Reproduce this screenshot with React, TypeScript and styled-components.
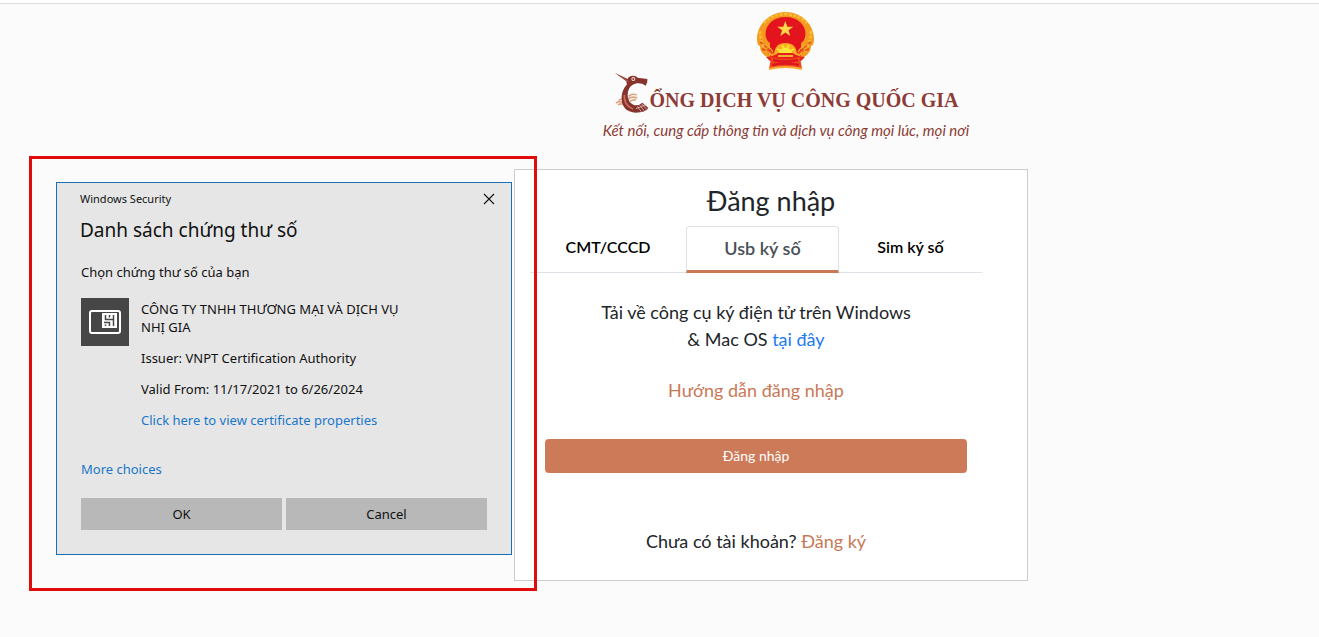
import React from "react";
import styled, { createGlobalStyle } from "styled-components";

const GlobalStyle = createGlobalStyle`
  * { box-sizing: border-box; }
  html { background: #fbfbfb; }
  body { margin: 0; font-family: Lato, "Noto Sans", sans-serif; color: #212529; }
  h1, h2, p { margin: 0; font-weight: 400; }
  button { font-family: inherit; cursor: pointer; border: 0; padding: 0; background: none; }
  a { text-decoration: none; }
`;

const TopEdge = styled.div`
  height: 4px;
  background: #fff;
  border-bottom: 1px solid #dcdcdc;
`;

const Page = styled.main`
  display: grid;
  grid-template-columns: 514px minmax(0, 514px) 1fr;
  padding-bottom: 46px;
`;

const Brand = styled.header`
  display: flex;
  flex-direction: column;
  align-items: center;
  height: 165px;
  padding: 7px 0 0 30px;
  color: #8c3b36;
`;

const Wordmark = styled.h1`
  display: flex;
  align-items: flex-end;
  height: 42px;
  font: 700 20px/26px "Liberation Serif", serif;
  white-space: nowrap;
`;

const Slogan = styled.p`
  margin-top: 7px;
  font-size: 15px;
  line-height: 20px;
  font-style: italic;
  white-space: nowrap;
`;

const Highlight = styled.section`
  position: relative;
  z-index: 1;
  align-self: start;
  margin: 152px -23px 0 29px;
  padding: 23px 22px 33px 24px;
  border: 3px solid #e00b0b;
`;

const Dialog = styled.div`
  display: flex;
  flex-direction: column;
  padding: 7px 24px 24px;
  background: #e6e6e6;
  border: 1px solid #1a6fb5;
  color: #111;
  font: 13px/18px "Noto Sans", sans-serif;
`;

const TitleBar = styled.div`
  display: flex;
  align-items: center;
  justify-content: space-between;
  margin: 0 -8px 0 -1px;
  height: 18px;
  font-size: 11px;
`;

const CloseButton = styled.button`
  display: flex;
  width: 12px;
  height: 12px;
`;

const DialogTitle = styled.h2`
  margin: 8px 0 0 -1px;
  font-size: 19px;
  line-height: 28px;
`;

const Prompt = styled.p`
  margin-top: 19px;
`;

const Certificate = styled.div`
  display: flex;
  gap: 12px;
  margin-top: 17px;
`;

const CardTile = styled.span`
  display: flex;
  flex: none;
  align-items: center;
  justify-content: center;
  width: 48px;
  height: 48px;
  background: #464646;
`;

const Details = styled.div`
  display: flex;
  flex-direction: column;
  align-items: flex-start;
  gap: 13px;
  padding-top: 2px;
  max-width: 290px;
`;

const SystemLink = styled.a`
  color: #1a77c9;
`;

const MoreRow = styled.p`
  margin-top: 31px;
`;

const Actions = styled.div`
  display: grid;
  grid-template-columns: 1fr 1fr;
  gap: 4px;
  margin-top: 20px;
`;

const SystemButton = styled.button`
  height: 32px;
  background: #b8b8b8;
  color: #111;
  font-size: 13px;
`;

const LoginCard = styled.section`
  padding: 13px 45px 25px 15px;
  background: #fff;
  border: 1px solid #cbcbd0;
`;

const LoginTitle = styled.h2`
  padding-left: 30px;
  font-size: 27px;
  line-height: 36px;
  text-align: center;
`;

const TabList = styled.div`
  display: grid;
  grid-template-columns: 156fr 153fr 143fr;
  margin-top: 7px;
  border-bottom: 1px solid #dee2e6;
`;

const Tab = styled.button<{ $active?: boolean }>`
  height: 47px;
  margin-bottom: -1px;
  padding-bottom: ${(p) => (p.$active ? 2 : 8)}px;
  border: 1px solid ${(p) => (p.$active ? "#dee2e6" : "transparent")};
  border-bottom: ${(p) => (p.$active ? "3px solid #c97856" : "0")};
  border-radius: 4px 4px 0 0;
  color: ${(p) => (p.$active ? "#495057" : "#000")};
  font-size: ${(p) => (p.$active ? 18 : 16)}px;
  font-weight: 600;
`;

const Panel = styled.div`
  display: flex;
  flex-direction: column;
  padding: 26px 15px 0;
  text-align: center;
  font-size: 18px;
  line-height: 27px;
`;

const Download = styled.p`
  align-self: center;
  max-width: 340px;
`;

const BlueLink = styled.a`
  color: #1b7bf2;
`;

const AccentLink = styled.a`
  color: #c97856;
`;

const Guide = styled.p`
  margin-top: 24px;
`;

const LoginButton = styled.button`
  height: 34px;
  margin-top: 35px;
  padding-bottom: 2px;
  border-radius: 4px;
  background: #cd7a59;
  color: #fff;
  font-size: 14px;
`;

const SignUp = styled.p`
  margin-top: 55px;
`;

function Emblem() {
  return (
    <svg width="60" height="60" viewBox="0 0 60 60" role="img" aria-label="Quốc huy Việt Nam">
      <path d="M29.500 1C13 1 1 14 1 28q0 3 1 6l2 1q0 7 7 11l4 2h29l4-2q7-4 7-11l2-1q1-3 1-6C58 14 46 1 29.500 1z" fill="#f39a1f" />
      <path d="M8 12q7-8 21-9 15 1 22 9M4 20q0 10 5 18M55 20q0 10-5 18" fill="none" stroke="#f9bd3a" strokeWidth="2.500" strokeDasharray="3 1.500" />
      <path d="M4 31q7 4 12 12M6 38q6 2 10 7M55 31q-7 4-12 12M53 38q-6 2-10 7" fill="none" stroke="#e8501c" strokeWidth="2" strokeDasharray="4 1" />
      <path d="M29.500 6C17 6 9.500 14 9.500 23q0 7 6 10l6 2h16l6-2q6-3 6-10C49.500 14 42 6 29.500 6z" fill="#e4141f" />
      <path d="M14 31l8 3-3 9-5-3zM45 31l-8 3 3 9 5-3z" fill="#e4141f" />
      <path d="M29.300 10l2 5.700h6l-4.800 3.600 1.800 5.800-5-3.500-5 3.500 1.800-5.800-4.800-3.600h6z" fill="#ffd84a" />
      <path d="M18 43q1-11 11.500-11T41 43z" fill="#fbb01f" />
      <path d="M23 43a6.500 6.500 0 0 1 13 0z" fill="#ffe63c" />
      <path d="M21 38l4 2M26 34l1.500 3M33 34l-1.500 3M38 38l-4 2" stroke="#ffe63c" strokeWidth="1.500" />
      <path d="M6 33q7 1 11 8M8 40q5 1 9 5M53 33q-7 1-11 8M51 40q-5 1-9 5" fill="none" stroke="#fbb735" strokeWidth="1.200" />
      <path d="M10 46q9-1 12-4h15q3 3 12 4l-4 4H14z" fill="#e4201c" />
      <path d="M15 46q14 4 29 0l2 12q-16-4-33 0z" fill="#f04a1a" />
      <path d="M17 49q12 3 25 0M16 54q13-3 27 0" fill="none" stroke="#df1720" strokeWidth="2.500" />
      <path d="M13 58q16-4 33 0M22 45h15" fill="none" stroke="#f9ad35" strokeWidth="2" />
    </svg>
  );
}

function DragonC() {
  return (
    <svg width="36" height="42" viewBox="3 8 108 126" role="img" aria-label="C">
      <path d="M20 96q8-8 20 0M12 104q10-8 24 0M18 110q8-5 16-2M50 84q10-10 24-4M48 92q12-9 28-3M54 99q10-6 18-4" fill="none" stroke="#dda482" strokeWidth="5" />
      <path d="M8 13L47 32q2-9 17-10 8 0 13 6l29 4q2 8-5 20-12-9-27-7-7 2-13 5Q47 60 47 80q0 22 18 30 14 4 26-7l18 16q-8 14-38 14-38-2-42-38Q27 68 45 48q-2-4-2-9z" fill="#85332c" />
      <path d="M37 80q-2 31 26 42" fill="none" stroke="#c4705a" strokeWidth="5" />
      <circle cx="64" cy="32" r="6" fill="#f3ddd6" />
      <circle cx="64" cy="32" r="3" fill="#85332c" />
      <path d="M76 114l12 16M83 111l14 16M89 107l15 16M72 121l34-14" stroke="#f3ddd6" strokeWidth="2" />
      <path d="M51 40L28 25" stroke="#c4705a" strokeWidth="2" />
    </svg>
  );
}

function SmartCard() {
  return (
    <svg width="34" height="26" viewBox="0 0 34 26" fill="none" stroke="#fff" strokeWidth="2" aria-hidden="true">
      <rect x="2" y="2" width="30" height="22" rx="2" />
      <rect x="14" y="4" width="15" height="15" fill="#fff" stroke="none" />
      <path d="M17.500 6v4.500h8M21.500 6v2.500M25.500 6v11M16 13.500h5.500V17M17.500 15.500V17" stroke="#464646" strokeWidth="1.500" />
    </svg>
  );
}

export default function App() {
  return (
    <>
      <GlobalStyle />
      <TopEdge />
      <Page>
        <Highlight>
          <Dialog role="dialog" aria-labelledby="dialog-title">
            <TitleBar>
              <span>Windows Security</span>
              <CloseButton aria-label="Close">
                <svg width="12" height="12" viewBox="0 0 12 12" stroke="#111" strokeWidth="1.100">
                  <path d="M1 1l10 10M11 1L1 11" />
                </svg>
              </CloseButton>
            </TitleBar>
            <DialogTitle id="dialog-title">Danh sách chứng thư số</DialogTitle>
            <Prompt>Chọn chứng thư số của bạn</Prompt>
            <Certificate>
              <CardTile><SmartCard /></CardTile>
              <Details>
                <p>CÔNG TY TNHH THƯƠNG MẠI VÀ DỊCH VỤ<br />NHỊ GIA</p>
                <p>Issuer: VNPT Certification Authority</p>
                <p>Valid From: 11/17/2021 to 6/26/2024</p>
                <SystemLink href="#certificate">Click here to view certificate properties</SystemLink>
              </Details>
            </Certificate>
            <MoreRow><SystemLink href="#more">More choices</SystemLink></MoreRow>
            <Actions>
              <SystemButton>OK</SystemButton>
              <SystemButton>Cancel</SystemButton>
            </Actions>
          </Dialog>
        </Highlight>
        <div>
          <Brand>
            <Emblem />
            <Wordmark><DragonC /><span>ỔNG DỊCH VỤ CÔNG QUỐC GIA</span></Wordmark>
            <Slogan>Kết nối, cung cấp thông tin và dịch vụ công mọi lúc, mọi nơi</Slogan>
          </Brand>
          <LoginCard>
            <LoginTitle>Đăng nhập</LoginTitle>
            <TabList role="tablist">
              <Tab role="tab" aria-selected="false">CMT/CCCD</Tab>
              <Tab role="tab" aria-selected="true" $active>Usb ký số</Tab>
              <Tab role="tab" aria-selected="false">Sim ký số</Tab>
            </TabList>
            <Panel role="tabpanel">
              <Download>
                Tải về công cụ ký điện tử trên Windows<br />&amp; Mac OS <BlueLink href="#download">tại đây</BlueLink>
              </Download>
              <Guide><AccentLink href="#guide">Hướng dẫn đăng nhập</AccentLink></Guide>
              <LoginButton>Đăng nhập</LoginButton>
              <SignUp>Chưa có tài khoản? <AccentLink href="#register">Đăng ký</AccentLink></SignUp>
            </Panel>
          </LoginCard>
        </div>
      </Page>
    </>
  );
}
